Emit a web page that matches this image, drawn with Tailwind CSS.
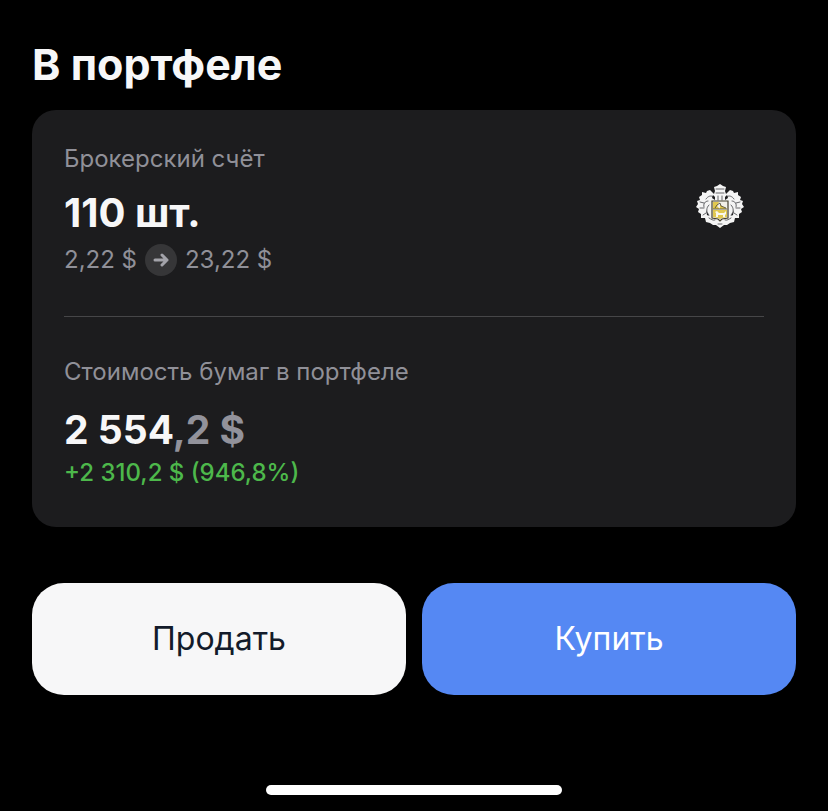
<!DOCTYPE html>
<html lang="ru">
  <head>
    <meta charset="UTF-8" />
    <meta name="viewport" content="width=device-width, initial-scale=1.0" />
    <title>В портфеле</title>
    <script src="https://cdn.jsdelivr.net/npm/@tailwindcss/browser@4"></script>
  </head>
  <body class="bg-black font-['Inter',sans-serif] text-[#f7f7f8]">
    <main class="flex min-h-screen flex-col px-8 pt-[38px] pb-4">
      <h1 class="mb-5 text-[43px] leading-[52px] font-bold">В портфеле</h1>

      <div class="rounded-3xl bg-[#1c1c1e] px-8 pt-[33px] pb-[38px]">
        <!-- Account and average price -->
        <section class="flex items-center justify-between border-b border-[#464648] pb-10">
          <div>
            <h2 class="text-2xl leading-8 text-[#909098]">Брокерский счёт</h2>
            <p class="mt-3.5 text-[40px] leading-12 font-bold">110 шт.</p>
            <div class="mt-[7px] flex items-center gap-2 text-2xl leading-8 text-[#909098]">
              <span>2,22 $</span>
              <span class="flex size-8 items-center justify-center rounded-full bg-[#363638]">
                <svg class="size-4" viewBox="0 0 16 16" fill="none" stroke="#a3a3aa" stroke-width="3" stroke-linecap="round" stroke-linejoin="round" aria-hidden="true">
                  <path d="M2 8h12M9 3l5 5-5 5" />
                </svg>
              </span>
              <span>23,22 $</span>
            </div>
          </div>

          <!-- Broker crest -->
          <svg class="mr-5 mb-2 h-11 w-12" viewBox="0 0 48 44" role="img" aria-label="Герб брокера">
            <g fill="#f4f4f4">
              <path d="M18 3l3-1 3-2 3 2 3 1-1 4 1 3 4-4 3 1 1 2 4-1 0 3 3 2-1 3 3 1-1 3 2 3-3 2 1 3-3 2 0 4-4 0-1 4-4 1-3 2-3 0-4 3-4-3-3 0-3-2-4-1-1-4-4 0 0-4-3-2 1-3-3-2 2-3-1-3 3-1-1-3 3-2 0-3 4 1 1-2 3-1 4 4 1-3z" />
            </g>
            <g fill="none" stroke="#55565a" stroke-width="0.9" stroke-linecap="round">
              <path d="M20 5h8M20 9h8M22 12v4M26 12v4" />
              <path d="M18 13c-3-2-6-1-8 2M30 13c3-2 6-1 8 2" />
              <path d="M12 17c-3 0-5 3-4 6M36 17c3 0 5 3 4 6" />
              <path d="M13 21c-3 3-3 7 0 10M35 21c3 3 3 7 0 10" />
              <path d="M4 18l4 1M44 18l-4 1M4 24l4 0M44 24l-4 0M7 31l3-2M41 31l-3-2" />
              <path d="M13 34c2 1 4 3 6 2M35 34c-2 1-4 3-6 2M22 40h4" />
            </g>
            <path fill="#1c1c1e" d="M17 11l2 2 0 3-3-2zM31 11l-2 2 0 3 3-2zM10 26l3 6-2-1zM38 26l-3 6 2-1z" />
            <path fill="#f2f0e8" stroke="#45402e" stroke-width="1.200" d="M16 17h16v17l-6 1-2 2-2-2-6-1z" />
            <path fill="#e1c84f" d="M17 18h6l-2 4 3 3h-7zM24 21l7 4h-7z" />
            <path fill="#e1c84f" d="M17 26h14v7l-5 1-2 1-2-1-5-1z" />
            <path fill="#faf8ec" d="M19 28l2-1 2 2h5l2-2v3l-1 1v2h-2v-2h-5v2h-2v-4z" />
            <path fill="none" stroke="#45402e" stroke-width="0.8" d="M17 25h14M19 24l2-3 3-2 1 3 5 2" />
          </svg>
        </section>

        <!-- Position value and profit -->
        <section class="pt-[39px]">
          <h2 class="text-2xl leading-8 text-[#909098]">Стоимость бумаг в портфеле</h2>
          <p class="mt-[18px] text-[39px] leading-12 font-bold">2 554<span class="text-[#92929b]">,2 $</span></p>
          <p class="mt-[3px] text-2xl leading-8 font-medium text-[#4db84b]">+2 310,2 $ (946,8%)</p>
        </section>
      </div>

      <div class="mt-14 grid grid-cols-2 gap-4">
        <button type="button" class="h-28 rounded-4xl bg-[#f7f7f8] text-[32px] leading-10 text-[#131b2a]">Продать</button>
        <button type="button" class="h-28 rounded-4xl bg-[#5588f3] text-[32px] leading-10 text-white">Купить</button>
      </div>

      <!-- Home indicator -->
      <div class="mx-auto mt-auto h-2.5 w-[296px] rounded-full bg-white"></div>
    </main>
  </body>
</html>
